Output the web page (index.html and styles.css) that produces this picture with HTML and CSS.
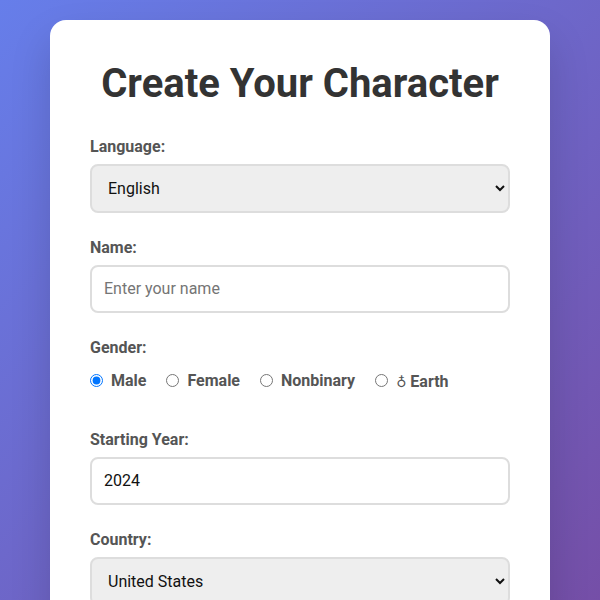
FILE: index.html
```html
<!DOCTYPE html>
<html lang="en">
<head>
<meta charset="utf-8">
<title>Create Your Character</title>
<link rel="stylesheet" href="styles.css">
</head>
<body>
<div class="card">
  <h1 class="title">Create Your Character</h1>
  <form class="form">
    <div class="group">
      <label class="label" for="lang">Language:</label>
      <select class="field select" id="lang">
        <option>English</option>
        <option>Español</option>
        <option>Français</option>
      </select>
    </div>
    <div class="group">
      <label class="label" for="name">Name:</label>
      <input class="field input" id="name" type="text" placeholder="Enter your name">
    </div>
    <div class="group">
      <label class="label">Gender:</label>
      <div class="radios">
        <label class="radio"><input type="radio" name="g" checked><span>Male</span></label>
        <label class="radio"><input type="radio" name="g"><span>Female</span></label>
        <label class="radio"><input type="radio" name="g"><span>Nonbinary</span></label>
        <label class="radio"><input type="radio" name="g"><span class="earth"><span class="sym">♁</span> Earth</span></label>
      </div>
    </div>
    <div class="group">
      <label class="label" for="year">Starting Year:</label>
      <input class="field input" id="year" type="number" value="2024">
    </div>
    <div class="group">
      <label class="label" for="country">Country:</label>
      <select class="field select" id="country">
        <option>United States</option>
        <option>Canada</option>
      </select>
    </div>
  </form>
</div>
</body>
</html>
```

FILE: styles.css
```css
* { box-sizing: border-box; }
html, body { margin: 0; }
body {
  min-height: 100vh;
  padding: 20px;
  font-family: Roboto, "Liberation Sans", sans-serif;
  background: linear-gradient(135deg, #667eea 0%, #764ba2 100%);
}
.card {
  max-width: 500px;
  margin: 0 auto;
  background: #fff;
  border-radius: 16px;
  padding: 40px;
  box-shadow: 0 20px 40px rgba(0, 0, 0, 0.15);
}
.title {
  margin: 0 0 30px;
  text-align: center;
  font-size: 40px;
  font-weight: 700;
  color: #333;
}
.group { margin-bottom: 25px; }
.label {
  display: block;
  margin-bottom: 8px;
  font-size: 16px;
  font-weight: 700;
  color: #555;
}
.field {
  display: block;
  width: 100%;
  font-family: Roboto, "Liberation Sans", sans-serif;
  font-size: 16px;
  color: #111;
  border: 2px solid #ddd;
  border-radius: 8px;
  padding: 12px;
  background: #fff;
}
.input { padding: 12px 12px 13px; }
.select {
  background: #eee;
  padding: 12px 12px;
}
.radios {
  display: flex;
  align-items: center;
  gap: 20px;
  padding: 4px 0 14px;
}
.radio {
  display: flex;
  align-items: center;
  gap: 8px;
  font-size: 16px;
  font-weight: 700;
  color: #555;
}
.radio input { margin: 0; width: 13px; height: 13px; }
.earth { padding-top: 3px; }
.sym {
  font-family: "DejaVu Sans", sans-serif;
  font-weight: 400;
  font-size: 14px;
}
```
